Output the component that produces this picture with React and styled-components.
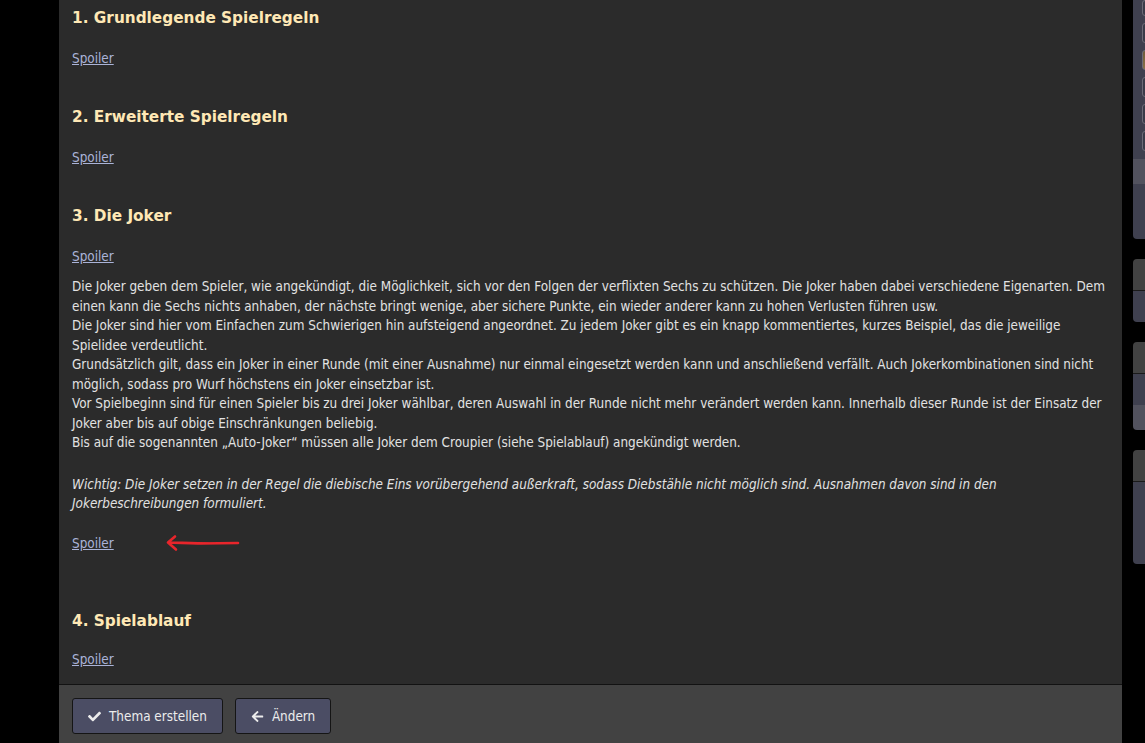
import React from 'react';
import styled, { createGlobalStyle } from 'styled-components';
import { FaCheck, FaArrowLeft } from 'react-icons/fa';

const GlobalStyle = createGlobalStyle`
  html, body {
    margin: 0;
    padding: 0;
    background: #000;
    overflow: hidden;
  }
`;

const Page = styled.div`
  display: flex;
  width: 1145px;
  height: 743px;
  overflow: hidden;
`;

const Main = styled.div`
  margin-left: 59px;
  width: 1063px;
  height: 743px;
  display: flex;
  flex-direction: column;
  background: #2b2b2b;
  flex-shrink: 0;
`;

const Content = styled.div`
  flex: 1;
  padding: 8px 12px 0 13px;
  font-family: 'DejaVu Sans Condensed', 'DejaVu Sans', sans-serif;
  font-size: 13.4px;
  color: #e2e2e2;
`;

const Heading = styled.h3`
  margin: ${p => p.$top || 0}px 0 0;
  font-family: 'DejaVu Sans', Verdana, sans-serif;
  font-weight: bold;
  font-size: 15.3px;
  line-height: 20px;
  color: #ffe8b5;
`;

const Spoiler = styled.a`
  display: block;
  width: max-content;
  margin-top: ${p => p.$top || 0}px;
  line-height: 19px;
  color: #aab3d8;
  text-decoration: underline;
  cursor: pointer;
`;

const SpoilerRow = styled.div`
  display: flex;
  align-items: center;
  gap: 52px;
  margin-top: 20px;
`;

const Text = styled.p`
  margin: ${p => p.$top || 0}px 0 0;
  line-height: 19.5px;
  font-style: ${p => (p.$italic ? 'italic' : 'normal')};
`;

const Footer = styled.div`
  border-top: 1px solid #121212;
  background: #424242;
  height: 59px;
  padding: 13px 13px 0;
  box-sizing: border-box;
  display: flex;
  gap: 12px;
  align-items: flex-start;
`;

const Button = styled.button`
  display: flex;
  align-items: center;
  gap: 8px;
  height: 36px;
  padding: 0 15px 0 15px;
  background: #4b4d64;
  border: 1px solid #151515;
  border-radius: 3px;
  color: #ececec;
  font-family: 'DejaVu Sans Condensed', 'DejaVu Sans', sans-serif;
  font-size: 13.4px;
  cursor: pointer;

  svg {
    font-size: 13px;
  }
`;

const Sidebar = styled.div`
  margin-left: 11px;
  width: 200px;
  flex-shrink: 0;
  display: flex;
  flex-direction: column;
  gap: 20px;
`;

const Card = styled.div`
  display: flex;
  flex-direction: column;
  overflow: hidden;
  border-radius: ${p => (p.$top ? '0 0 4px 4px' : '4px')};
`;

const CardHead = styled.div`
  height: 31px;
  background: #424242;
  border-bottom: 1px solid #1a1a1a;
`;

const CardBody = styled.div`
  height: ${p => p.$h}px;
  background: ${p => (p.$light ? '#52525e' : '#3f404f')};
`;

const AvatarList = styled.div`
  display: flex;
  flex-direction: column;
  gap: 7px;
  padding: 0 0 8px 9px;
  background: #3f404f;
`;

const Avatar = styled.div`
  width: 16px;
  height: ${p => p.$h || 18}px;
  border: 1px solid #6c6c78;
  border-radius: 3px;
  background: ${p => (p.$img ? 'linear-gradient(135deg,#6b5a3a,#a08454)' : '#3a3b49')};
`;

function RedArrow() {
  return (
    <svg width="74" height="18" viewBox="0 0 74 18">
      <path
        d="M2 8.5 C20 9, 30 9.5, 44 9.5 M34 9.5 L72 9 M2 8.5 L9 2.5 M2 8.5 L10 15.5"
        stroke="#e8252b"
        strokeWidth="2.6"
        strokeLinecap="round"
        fill="none"
      />
    </svg>
  );
}

export default function App() {
  return (
    <>
      <GlobalStyle />
      <Page>
        <Main>
          <Content>
            <Heading>1. Grundlegende Spielregeln</Heading>
            <Spoiler $top={21}>Spoiler</Spoiler>

            <Heading $top={39}>2. Erweiterte Spielregeln</Heading>
            <Spoiler $top={21}>Spoiler</Spoiler>

            <Heading $top={39}>3. Die Joker</Heading>
            <Spoiler $top={21}>Spoiler</Spoiler>
            <Text $top={11}>
              Die Joker geben dem Spieler, wie angekündigt, die Möglichkeit, sich vor den Folgen der verflixten Sechs zu schützen. Die Joker haben dabei verschiedene Eigenarten. Dem einen kann die Sechs nichts anhaben, der nächste bringt wenige, aber sichere Punkte, ein wieder anderer kann zu hohen Verlusten führen usw.
              <br />
              Die Joker sind hier vom Einfachen zum Schwierigen hin aufsteigend angeordnet. Zu jedem Joker gibt es ein knapp kommentiertes, kurzes Beispiel, das die jeweilige Spielidee verdeutlicht.
              <br />
              Grundsätzlich gilt, dass ein Joker in einer Runde (mit einer Ausnahme) nur einmal eingesetzt werden kann und anschließend verfällt. Auch Jokerkombinationen sind nicht möglich, sodass pro Wurf höchstens ein Joker einsetzbar ist.
              <br />
              Vor Spielbeginn sind für einen Spieler bis zu drei Joker wählbar, deren Auswahl in der Runde nicht mehr verändert werden kann. Innerhalb dieser Runde ist der Einsatz der Joker aber bis auf obige Einschränkungen beliebig.
              <br />
              Bis auf die sogenannten „Auto-Joker“ müssen alle Joker dem Croupier (siehe Spielablauf) angekündigt werden.
            </Text>
            <Text $top={22} $italic>
              Wichtig: Die Joker setzen in der Regel die diebische Eins vorübergehend außerkraft, sodass Diebstähle nicht möglich sind. Ausnahmen davon sind in den Jokerbeschreibungen formuliert.
            </Text>
            <SpoilerRow>
              <Spoiler>Spoiler</Spoiler>
              <RedArrow />
            </SpoilerRow>

            <Heading $top={58}>4. Spielablauf</Heading>
            <Spoiler $top={19}>Spoiler</Spoiler>
          </Content>
          <Footer>
            <Button>
              <FaCheck />
              Thema erstellen
            </Button>
            <Button>
              <FaArrowLeft />
              Ändern
            </Button>
          </Footer>
        </Main>
        <Sidebar>
          <Card $top>
            <AvatarList>
              <Avatar $h={14} />
              <Avatar />
              <Avatar $img />
              <Avatar />
              <Avatar />
              <Avatar />
            </AvatarList>
            <CardBody $h={25} $light />
            <CardBody $h={55} />
          </Card>
          <Card>
            <CardHead />
            <CardBody $h={31} />
          </Card>
          <Card>
            <CardHead />
            <CardBody $h={31} />
            <CardBody $h={25} $light />
          </Card>
          <Card>
            <CardHead />
            <CardBody $h={82} />
          </Card>
        </Sidebar>
      </Page>
    </>
  );
}
